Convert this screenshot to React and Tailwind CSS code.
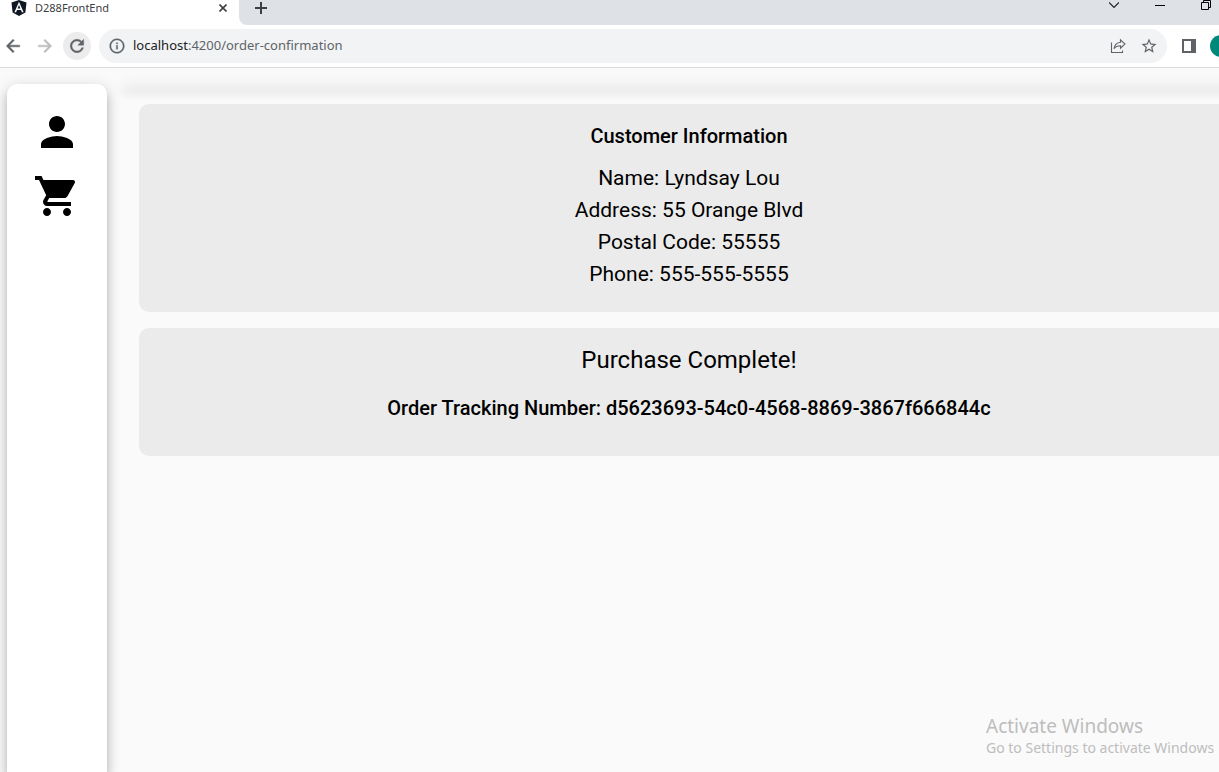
const MATERIAL_SHADOW =
  "shadow-[0_5px_5px_-3px_rgba(0,0,0,0.2),0_8px_10px_1px_rgba(0,0,0,0.14),0_3px_14px_2px_rgba(0,0,0,0.12)]";

function Icon({ size = "size-5", children }) {
  return (
    <svg viewBox="0 0 24 24" className={`${size} shrink-0 fill-current`} aria-hidden="true">
      {children}
    </svg>
  );
}

function AngularLogo() {
  return (
    <svg viewBox="0 0 16 16" className="size-4 shrink-0" aria-hidden="true">
      <path d="M8 0l7.500 2.600-1.100 9.800L8 16l-6.400-3.600L.5 2.600z" fill="#0f1722" />
      <path d="M8 1.800L3.400 12.200h1.700l.9-2.300h4l.9 2.300h1.700zM8 5l1.400 3.500H6.600z" fill="#fff" />
    </svg>
  );
}

function TabStrip() {
  return (
    <div className="flex h-[25px] items-start bg-white text-[#3c4043]">
      <div className="flex w-[239px] shrink-0 items-center pl-[11px] pr-2">
        <AngularLogo />
        <span className="ml-2 flex-1 text-[11px] leading-4">D288FrontEnd</span>
        <button aria-label="Close tab" className="flex size-4 items-center justify-center">
          <svg viewBox="0 0 8 8" className="size-2 stroke-current" strokeWidth="1.600" aria-hidden="true">
            <path d="M.5.5l7 7M7.500.5l-7 7" />
          </svg>
        </button>
      </div>
      <div className="flex h-full flex-1 items-start rounded-bl-lg bg-[#dee1e6] pl-4">
        <button aria-label="New tab" className="mt-0.5 flex size-3 items-center justify-center">
          <svg viewBox="0 0 12 12" className="size-3 stroke-current" strokeWidth="2" aria-hidden="true">
            <path d="M6 0v12M0 6h12" />
          </svg>
        </button>
        <div className="ml-auto flex items-start gap-9 pr-2 text-black">
          <button aria-label="Search tabs" className="h-3">
            <svg viewBox="0 0 10 12" className="h-3 w-[10px] fill-none stroke-[#202124]" strokeWidth="1.200" aria-hidden="true">
              <path d="M0 2.500l5 5 5-5" />
            </svg>
          </button>
          <button aria-label="Minimize" className="h-3">
            <svg viewBox="0 0 10 12" className="h-3 w-[10px] fill-none stroke-current" aria-hidden="true">
              <path d="M0 5.500h10" />
            </svg>
          </button>
          <button aria-label="Restore" className="h-3">
            <svg viewBox="0 0 10 12" className="h-3 w-[10px] fill-none stroke-current" aria-hidden="true">
              <path d="M.5 2.500h7v7h-7zM2.500 2.500v-2h7v7h-2" />
            </svg>
          </button>
        </div>
      </div>
    </div>
  );
}

function AddressBar() {
  return (
    <div className="flex h-[43px] items-center border-b border-[#dadce0] bg-white pl-[3px] text-[#5f6368]">
      <button aria-label="Back" className="mr-3">
        <Icon>
          <path d="M20 11H7.830l5.590-5.590L12 4l-8 8 8 8 1.410-1.410L7.830 13H20v-2z" className="stroke-current" strokeWidth="0.600" />
        </Icon>
      </button>
      <button aria-label="Forward" className="mr-2 text-[#babcbe]">
        <Icon>
          <path d="M12 4l-1.410 1.410L16.170 11H4v2h12.170l-5.580 5.590L12 20l8-8z" className="stroke-current" strokeWidth="0.600" />
        </Icon>
      </button>
      <button aria-label="Reload" className="flex size-7 items-center justify-center rounded-full bg-[#ececec]">
        <Icon>
          <path d="M17.650 6.350C16.200 4.900 14.210 4 12 4c-4.420 0-7.990 3.580-7.990 8s3.570 8 7.990 8c3.730 0 6.840-2.550 7.730-6h-2.080c-.82 2.330-3.040 4-5.650 4-3.310 0-6-2.690-6-6s2.690-6 6-6c1.660 0 3.140.69 4.220 1.780L13 11h7V4l-2.350 2.350z" className="stroke-current" strokeWidth="0.500" />
        </Icon>
      </button>
      <div className="ml-2 flex h-[34px] flex-1 items-center rounded-full bg-[#f1f3f4] pl-[10px] pr-[9px]">
        <Icon size="size-4">
          <path d="M11 7h2v2h-2zm0 4h2v6h-2zm1-10C5.900 1 1 5.900 1 12s4.900 11 11 11 11-4.900 11-11S18.100 1 12 1zm0 20c-5 0-9-4-9-9s4-9 9-9 9 4 9 9-4 9-9 9z" className="stroke-current" strokeWidth="0.500" />
        </Icon>
        <a href="#" className="ml-2 flex-1 text-[13px] text-[#5f6368]">
          <span className="text-[#202124]">localhost</span>:4200/order-confirmation
        </a>
        <button aria-label="Share this page" className="mr-3">
          <svg viewBox="0 0 20 20" className="size-5 fill-none stroke-current" strokeWidth="1.100" aria-hidden="true">
            <path d="M3.500 6.500v10h11V14.500M12.500 3.800l4.500 4.200-4.500 4.200v-2.500c-3 0-5 .7-6.500 3.100.5-3.600 2.500-6.200 6.500-6.600z" />
          </svg>
        </button>
        <button aria-label="Bookmark this tab">
          <Icon size="size-[18px]">
            <path d="M22 9.240l-7.190-.62L12 2 9.190 8.630 2 9.240l5.460 4.730L5.820 21 12 17.270 18.180 21l-1.630-7.030L22 9.240zM12 15.400l-3.760 2.270 1-4.280-3.320-2.880 4.380-.38L12 6.100l1.710 4.040 4.380.38-3.320 2.880 1 4.280L12 15.400z" />
          </Icon>
        </button>
      </div>
      <button aria-label="Side panel" className="ml-[15px] flex h-[14px] w-[14px] border-2 border-r-[5px] border-[#5f6368]" />
      <button aria-label="Profile" className="ml-[14px] -mr-[13px] size-[22px] rounded-full bg-[#00897b]" />
    </div>
  );
}

function Sidebar() {
  return (
    <nav className={`ml-[7px] flex w-[100px] shrink-0 flex-col items-center gap-4 rounded-t-[10px] bg-white pt-6 text-black ${MATERIAL_SHADOW}`}>
      <a href="#customer" aria-label="Customer">
        <Icon size="size-12">
          <path d="M12 12c2.210 0 4-1.790 4-4s-1.790-4-4-4-4 1.790-4 4 1.790 4 4 4zm0 2c-2.670 0-8 1.340-8 4v2h16v-2c0-2.660-5.330-4-8-4z" />
        </Icon>
      </a>
      <a href="#cart" aria-label="Cart">
        <Icon size="size-12">
          <path d="M7 18c-1.100 0-1.990.9-1.990 2S5.900 22 7 22s2-.9 2-2-.9-2-2-2zM1 2v2h2l3.600 7.590-1.350 2.450c-.16.280-.25.610-.25.960 0 1.100.9 2 2 2h12v-2H7.420c-.14 0-.25-.11-.25-.25l.03-.12.900-1.630h7.450c.75 0 1.410-.41 1.750-1.030l3.580-6.490c.08-.14.120-.31.120-.48 0-.55-.45-1-1-1H5.210l-.94-2H1zm16 16c-1.100 0-1.990.9-1.990 2s.89 2 1.990 2 2-.9 2-2-.9-2-2-2z" />
        </Icon>
      </a>
    </nav>
  );
}

function ActivationNotice() {
  return (
    <aside className="pointer-events-none absolute bottom-[14px] left-full -ml-[233px] whitespace-nowrap text-[#bdbdbd]">
      <p className="text-[19px] leading-6">Activate Windows</p>
      <p className="text-sm leading-5">Go to Settings to activate Windows</p>
    </aside>
  );
}

export default function App() {
  return (
    <div className="relative flex h-screen flex-col overflow-hidden bg-[#fafafa] font-['Noto_Sans','Open_Sans',sans-serif]">
      <header className="relative z-10 shrink-0">
        <TabStrip />
        <AddressBar />
      </header>
      <div className="flex flex-1 pt-4">
        <Sidebar />
        <main className="-mr-9 ml-4 flex-1 font-[Roboto,sans-serif] text-xl text-black">
          <div className={MATERIAL_SHADOW} />
          <div className="flex flex-col gap-4 bg-[#fafafa] bg-clip-content px-4 pt-5 text-center">
            <section className="rounded-[10px] bg-[#ebebeb] px-4 pb-[22px] pt-4">
              <h2 className="mb-[10px] font-medium leading-8">Customer Information</h2>
              <div className="text-[21px] leading-8">
                <p>Name: Lyndsay Lou</p>
                <p>Address: 55 Orange Blvd</p>
                <p>Postal Code: 55555</p>
                <p>Phone: 555-555-5555</p>
              </div>
            </section>
            <section className="rounded-[10px] bg-[#ebebeb] px-4 pb-8 pt-4">
              <h1 className="mb-4 text-2xl leading-8">Purchase Complete!</h1>
              <h2 className="font-medium leading-8">Order Tracking Number: d5623693-54c0-4568-8869-3867f666844c</h2>
            </section>
          </div>
        </main>
      </div>
      <ActivationNotice />
    </div>
  );
}
